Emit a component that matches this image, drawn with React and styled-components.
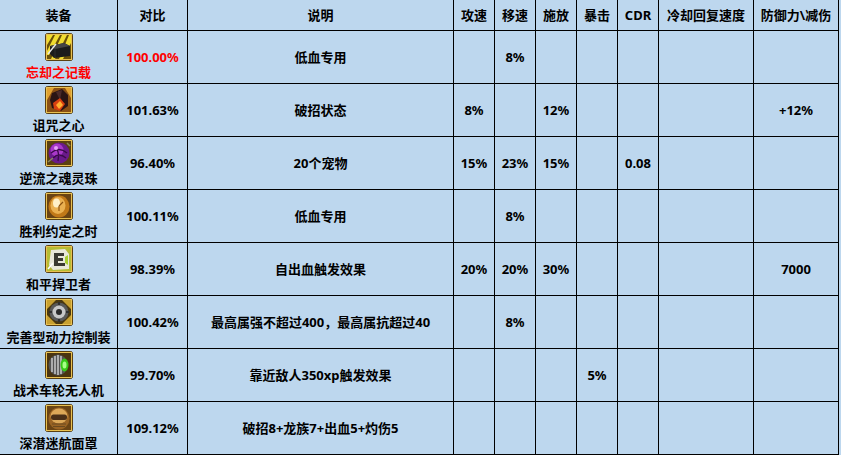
import React from 'react'
import styled, { createGlobalStyle } from 'styled-components'

const GlobalStyle = createGlobalStyle`
  html, body {
    margin: 0;
    padding: 0;
    background: #bdd7ee;
  }
  body {
    font-family: "Noto Sans", "Noto Sans CJK SC", sans-serif;
    color: #000;
  }
`

const Sheet = styled.div`
  display: grid;
  grid-template-columns: 118px 70px 266px 41px 41px 41px 41px 41px 95px 85px;
  grid-template-rows: 31px repeat(8, 53px);
  width: 839px;
  background: #bdd7ee;
`

const Cell = styled.div`
  box-sizing: border-box;
  border-right: 1px solid #000;
  border-bottom: 1px solid #000;
  display: flex;
  align-items: center;
  justify-content: center;
  font-family: "Noto Sans", "Noto Sans CJK SC", sans-serif;
  font-size: 13px;
  font-weight: 700;
  line-height: 16px;
  white-space: nowrap;
  color: ${({ $red }) => ($red ? '#ff0000' : '#000')};
`

const HeadCell = styled(Cell)`
  padding-bottom: 1px;
`

const ItemCell = styled(Cell)`
  flex-direction: column;
  justify-content: flex-start;
  padding-top: 2px;
  gap: 3px;
`

const IconBox = styled.svg`
  width: 28px;
  height: 28px;
  display: block;
  flex: none;
`

const Frame = ({ children, bg }) => (
  <IconBox viewBox="0 0 28 28">
    <rect x="0.5" y="0.5" width="27" height="27" rx="2" fill="#2a1a08" stroke="#5a4010" />
    <rect x="2" y="2" width="24" height="24" fill={bg} />
    {children}
    <rect x="1.5" y="1.5" width="25" height="25" fill="none" stroke="#e8c050" strokeWidth="1" />
  </IconBox>
)

const icons = {
  book: (
    <Frame bg="#6a5008">
      <path d="M2 2 L8 2 L2 12 Z M10 2 L15 2 L4 22 L2 22 L2 18 Z M17 2 L22 2 L10 26 L6 26 Z M24 2 L26 2 L26 10 L18 26 L14 26 Z" fill="#f0dc30" />
      <path d="M5 13 L19 10 L25 13 L25 23 L9 25 L5 21 Z" fill="#1c1c1c" />
      <path d="M5 13 L19 10 L25 13 L10 16 Z" fill="#454545" />
      <path d="M10 16 L10 25" stroke="#2e2e2e" strokeWidth="1" />
      <path d="M3 21 L11 11" stroke="#e8e8e8" strokeWidth="1.4" />
    </Frame>
  ),
  heart: (
    <Frame bg="#8a5014">
      <path d="M2 2 L9 2 L2 14 Z M26 2 L26 12 L20 2 Z" fill="#e0a030" />
      <path d="M7 7 L17 3 L23 9 L23 20 L16 25 L7 22 L5 14 Z" fill="#2a1414" />
      <path d="M11 6 L17 4 L15 14 Z" fill="#4a2a2a" />
      <path d="M8 17 L15 12 L20 18 L15 25 L9 23 Z" fill="#d84010" />
      <path d="M11 19 L15 15 L18 19 L14 23 Z" fill="#ffb030" />
    </Frame>
  ),
  orb: (
    <Frame bg="#5a4010">
      <circle cx="14" cy="14" r="10.5" fill="#6a1a8a" />
      <circle cx="12" cy="11" r="6.5" fill="#a838c8" />
      <path d="M6 14 Q14 7 22 14 M8 19 Q14 13 21 19 M10 8 Q15 12 13 22" stroke="#3a0a4a" strokeWidth="1.4" fill="none" />
      <circle cx="11" cy="9" r="2" fill="#e8a0f8" />
      <path d="M3 23 L8 19 M22 4 L25 7" stroke="#8a8a60" strokeWidth="1.5" />
    </Frame>
  ),
  watch: (
    <Frame bg="#6a4414">
      <ellipse cx="14" cy="14.5" rx="10.5" ry="11" fill="#c07818" />
      <ellipse cx="13" cy="13.5" rx="7.5" ry="8.5" fill="#eab050" />
      <ellipse cx="11.5" cy="11" rx="3.5" ry="4.5" fill="#fff0c8" />
      <path d="M14 14 L18 10 M14 14 L14 19" stroke="#8a5010" strokeWidth="1.1" />
    </Frame>
  ),
  guard: (
    <Frame bg="#9aa020">
      <path d="M2 2 L26 2 L26 26 L2 26 Z" fill="#d0d848" opacity="0.5" />
      <path d="M6 5 L20 4 L24 9 L24 24 L8 25 L4 20 Z" fill="#e8e8d8" />
      <path d="M9 8 L19 8 L19 11 L13 11 L13 13 L18 13 L18 16 L13 16 L13 18 L20 18 L20 21 L9 21 Z" fill="#3a3a30" />
      <path d="M20 12 L23 10 L23 20 L20 18 Z" fill="#a8d030" />
      <path d="M3 24 L8 18" stroke="#fff" strokeWidth="1.5" />
    </Frame>
  ),
  gear: (
    <Frame bg="#4a3810">
      <path d="M2 2 L11 2 L2 11 Z M26 2 L26 11 L17 2 Z M2 26 L2 17 L11 26 Z M26 26 L17 26 L26 17 Z" fill="#c8a030" />
      <circle cx="14" cy="14" r="9.5" fill="#5a5a5a" />
      <circle cx="14" cy="14" r="6.5" fill="#c8c8c8" />
      <circle cx="14" cy="14" r="3" fill="#2a2a2a" />
      <path d="M14 4 L14 7 M14 21 L14 24 M4 14 L7 14 M21 14 L24 14" stroke="#303030" strokeWidth="2.2" />
    </Frame>
  ),
  drone: (
    <Frame bg="#4a3410">
      <ellipse cx="13" cy="14" rx="9.5" ry="10.5" fill="#555" />
      <path d="M7 7 L7 21 M10 5 L10 23 M13 4 L13 24 M16 5 L16 23" stroke="#dcdcdc" strokeWidth="1.3" />
      <ellipse cx="19.5" cy="14" rx="4" ry="6.5" fill="#38c818" />
      <ellipse cx="19.5" cy="14" rx="2" ry="3.5" fill="#a8ff88" />
    </Frame>
  ),
  mask: (
    <Frame bg="#6a4414">
      <ellipse cx="14" cy="14.5" rx="10.5" ry="11" fill="#9a6424" />
      <ellipse cx="14" cy="12" rx="8.5" ry="7.5" fill="#dca858" />
      <rect x="6" y="10.5" width="16" height="5.5" rx="2.5" fill="#4a3018" />
      <path d="M7 20 L21 20 M8 22.5 L20 22.5" stroke="#6a4a20" strokeWidth="1.1" />
    </Frame>
  ),
}

const headers = ['装备', '对比', '说明', '攻速', '移速', '施放', '暴击', 'CDR', '冷却回复速度', '防御力\\减伤']

const rows = [
  { icon: 'book', name: '忘却之记载', ratio: '100.00%', desc: '低血专用', stats: ['', '8%', '', '', '', '', ''], red: true },
  { icon: 'heart', name: '诅咒之心', ratio: '101.63%', desc: '破招状态', stats: ['8%', '', '12%', '', '', '', '+12%'] },
  { icon: 'orb', name: '逆流之魂灵珠', ratio: '96.40%', desc: '20个宠物', stats: ['15%', '23%', '15%', '', '0.08', '', ''] },
  { icon: 'watch', name: '胜利约定之时', ratio: '100.11%', desc: '低血专用', stats: ['', '8%', '', '', '', '', ''] },
  { icon: 'guard', name: '和平捍卫者', ratio: '98.39%', desc: '自出血触发效果', stats: ['20%', '20%', '30%', '', '', '', '7000'] },
  { icon: 'gear', name: '完善型动力控制装', ratio: '100.42%', desc: '最高属强不超过400，最高属抗超过40', stats: ['', '8%', '', '', '', '', ''] },
  { icon: 'drone', name: '战术车轮无人机', ratio: '99.70%', desc: '靠近敌人350xp触发效果', stats: ['', '', '', '5%', '', '', ''] },
  { icon: 'mask', name: '深潜迷航面罩', ratio: '109.12%', desc: '破招8+龙族7+出血5+灼伤5', stats: ['', '', '', '', '', '', ''] },
]

const App = () => (
  <>
    <GlobalStyle />
    <Sheet>
      {headers.map((h) => (
        <HeadCell key={h}>{h}</HeadCell>
      ))}
      {rows.map((r) => (
        <React.Fragment key={r.name}>
          <ItemCell $red={r.red}>
            {icons[r.icon]}
            <span>{r.name}</span>
          </ItemCell>
          <Cell $red={r.red}>{r.ratio}</Cell>
          <Cell>{r.desc}</Cell>
          {r.stats.map((s, i) => (
            <Cell key={i}>{s}</Cell>
          ))}
        </React.Fragment>
      ))}
    </Sheet>
  </>
)

export default App
